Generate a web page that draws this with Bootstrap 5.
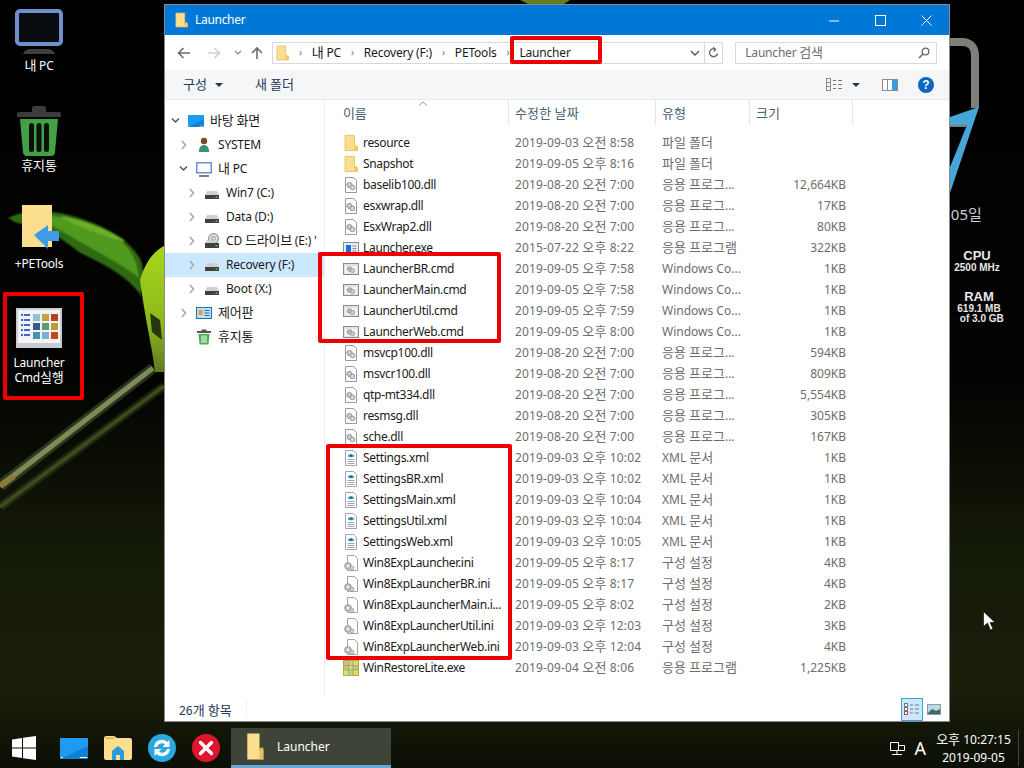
<!DOCTYPE html>
<html lang="ko">
<head>
    <meta charset="UTF-8">
    <meta name="viewport" content="width=device-width, initial-scale=1.0">
    <title>Launcher</title>
    <link href="https://cdn.jsdelivr.net/npm/bootstrap@5.3.0/dist/css/bootstrap.min.css" rel="stylesheet">
    <style>
        html, body { height: 100%; overflow: hidden; }
        body { background: #000; font-family: "Noto Sans", "Noto Sans CJK KR", sans-serif; font-size: 12px; color: #1a1a1a; }
        svg { display: block; flex: none; }
        .ko { font-size: 13px; }
        .desk { width: 1024px; height: 768px; position: relative; overflow: hidden; }
        .wallpaper { position: absolute; left: 0; top: 0; }
        .desk-icons { position: absolute; left: 0; top: 4px; width: 78px; }
        .desk-item { height: 99px; color: #fff; line-height: 15px; text-align: center; letter-spacing: -.2px; }
        .desk-pc { padding-top: 5px; }
        .desk-pc div { margin-top: 3px; }
        .desk-bin { padding-top: 3px; }
        .desk-bin div { margin-top: 2px; }
        .desk-tools { padding-top: 3px; }
        .desk-tools div { margin-top: 7px; }
        .desk-cmd { padding-top: 7px; }
        .desk-cmd div { margin-top: 7px; }
        .win { position: absolute; left: 164px; top: 4px; width: 786px; height: 718px; background: #fff; border: 1px solid #8a8a8a; }
        .titlebar { height: 30px; background: #0078d7; color: #fff; padding-left: 10px; }
        .titlebar .win-name { margin-left: 7px; letter-spacing: -.3px; }
        .cap-btn { width: 46px; height: 30px; }
        .addr-row { height: 35px; padding-left: 12px; padding-right: 12px; letter-spacing: -.2px; }
        .nav-arrows { width: 95px; }
        .nav-fwd { margin-left: 16px; }
        .nav-drop { margin-left: 13px; }
        .nav-up { margin-left: 9px; }
        .addr-box { width: 452px; height: 22px; border: 1px solid #d9d9d9; padding-left: 3px; }
        .addr-path { color: #1a1a1a; }
        .addr-sep { color: #777; margin: 0 10px; font-size: 10px; }
        .addr-end { width: 18px; border-left: 1px solid #d9d9d9; height: 20px; }
        .search-box { width: 202px; height: 22px; border: 1px solid #d9d9d9; margin-left: 12px; padding: 0 6px 0 9px; color: #6d6d6d; }
        .toolbar { height: 30px; background: #f5f6f7; border-bottom: 1px solid #e8e9ea; padding-left: 18px; padding-right: 15px; color: #1e395b; }
        .tool-caret { width: 0; height: 0; border-left: 4px solid transparent; border-right: 4px solid transparent; border-top: 4px solid #1e395b; }
        .tool-view-caret { margin-left: 9px; margin-right: 22px; }
        .tool-help { margin-left: 20px; }
        .panes { height: 597px; }
        .tree { width: 160px; border-right: 1px solid #f0f0f0; padding-top: 9px; flex: none; letter-spacing: -.2px; }
        .tree-row { height: 24px; white-space: nowrap; overflow: hidden; }
        .tree-row.sel { background: #cce8ff; }
        .tree-name { margin-left: 6px; }
        .tree-icon { margin-left: 2px; }
        .chev { width: 20px; flex: none; }
        .files { flex: 1; position: relative; }
        .head-row { height: 25px; color: #4c607a; position: relative; }
        .sort-mark { position: absolute; left: 93px; top: 1px; }
        .head-cell { height: 25px; padding-left: 6px; border-right: 1px solid #e5e5e5; line-height: 26px; }
        .c-name { width: 184px; flex: none; padding-left: 18px; white-space: nowrap; letter-spacing: -.32px; }
        .c-date { width: 147px; flex: none; padding-left: 6px; color: #6d6d6d; letter-spacing: .14px; }
        .c-type { width: 94px; flex: none; padding-left: 6px; color: #6d6d6d; white-space: nowrap; }
        .c-size { width: 103px; flex: none; padding-right: 7px; text-align: right; color: #6d6d6d; }
        .head-cell.c-name { padding-left: 18px; }
        .head-cell.c-date, .head-cell.c-type, .head-cell.c-size { color: #4c607a; text-align: left; padding-left: 6px; }
        .file-list { padding-top: 7px; }
        .file-row { height: 21px; line-height: 21px; }
        .file-row svg { margin-right: 4px; }
        .statusbar { height: 24px; padding-left: 14px; padding-right: 5px; color: #1e395b; }
        .status-text { margin-top: 3px; }
        .status-sep { width: 1px; height: 18px; background: #eee; margin-left: 14px; }
        .view-on { width: 22px; height: 23px; background: #cce8ff; border: 1px solid #3ba3d8; }
        .view-off { width: 21px; height: 23px; }
        .red-box { position: absolute; border: 4px solid #ee0000; border-radius: 2px; }
        .taskbar { position: absolute; left: 0; bottom: 0; width: 1024px; height: 40px; color: #fff; }
        .task-btn { width: 160px; height: 40px; background: #3f4438; border-bottom: 3px solid #68a9dc; padding-left: 15px; margin-left: 11px; }
        .task-btn span { margin-left: 13px; }
        .tray { width: 136px; height: 40px; padding-right: 5px; }
        .tray-a { font-size: 18px; margin-left: 9px; }
        .clock { width: 83px; text-align: center; line-height: 18px; margin-left: 6px; margin-right: 3px; }
        .tray-end { width: 1px; height: 36px; background: #444; }
        .gadget { position: absolute; color: #e8e8e8; font-family: "Liberation Sans", sans-serif; font-weight: 700; line-height: 10px; font-size: 10px; text-align: center; white-space: nowrap; }
        .gadget b { display: block; font-size: 13px; line-height: 14px; }
        .gadget-day { position: absolute; left: 937px; top: 203px; color: #cfcfcf; font-size: 15px; }
        .gadget-day .ko { font-size: 15px; }
        .pointer { position: absolute; left: 983px; top: 611px; }
    </style>
</head>
<body>
    <svg width="0" height="0" class="position-absolute">
        <defs>
            <symbol id="i-folder" viewBox="0 0 14 16">
                <path d="M1 .5h9.500V12h3v3.500H1z" fill="#fbdf8e" stroke="#e2bd5e" stroke-width=".8"/>
                <path d="M10.500 15.500V10.500h3v5z" fill="#eec864"/>
            </symbol>
            <symbol id="i-dll" viewBox="0 0 16 16">
                <path d="M2.500 .5h8l3 3v12h-11z" fill="#fff" stroke="#9a9a9a"/>
                <circle cx="6.500" cy="8" r="2.600" fill="#c3cbd2" stroke="#8d969e"/>
                <circle cx="9.500" cy="10.500" r="2.300" fill="#d3dbe2" stroke="#8d969e"/>
            </symbol>
            <symbol id="i-exe" viewBox="0 0 16 16">
                <rect x=".5" y="2.500" width="15" height="11" fill="#e9edf2" stroke="#7d8fa3"/>
                <rect x="3" y="5" width="5" height="7" fill="#1a6fd8"/>
                <path d="M9.500 6h4M9.500 8.500h4M9.500 11h4" stroke="#8a9099"/>
            </symbol>
            <symbol id="i-cmd" viewBox="0 0 16 16">
                <rect x=".5" y="2.500" width="15" height="11" fill="#dfe3e6" stroke="#8a8a8a"/>
                <rect x="2" y="5" width="12" height="7" fill="#f3f4f5"/>
                <circle cx="6.500" cy="8" r="2.300" fill="#b3bec7" stroke="#87919a" stroke-width=".8"/>
                <circle cx="9.500" cy="9.500" r="2.100" fill="#c6d3de" stroke="#87919a" stroke-width=".8"/>
            </symbol>
            <symbol id="i-xml" viewBox="0 0 16 16">
                <path d="M2.500 .5h8l3 3v12h-11z" fill="#fff" stroke="#a5a5a5"/>
                <path d="M4.500 6c1.500-2.500 5.500-2.500 7 0-1.500 1.800-5.500 1.800-7 0z" fill="#2aa7a0"/>
                <circle cx="8" cy="5.700" r="1.100" fill="#1d5fa8"/>
                <path d="M4.500 9.500h7M4.500 11.500h7M4.500 13.500h7" stroke="#a5a5a5"/>
            </symbol>
            <symbol id="i-ini" viewBox="0 0 16 16">
                <path d="M4.500 .5h7l3 3v12h-10z" fill="#fff" stroke="#a5a5a5"/>
                <circle cx="5" cy="11" r="3.300" fill="#c4c4c4" stroke="#989898"/>
                <circle cx="5" cy="11" r="1.200" fill="#f2f2f2"/>
                <circle cx="9" cy="13" r="2" fill="#d2d2d2" stroke="#989898" stroke-width=".7"/>
            </symbol>
            <symbol id="i-grid" viewBox="0 0 16 16">
                <rect x=".5" y=".5" width="15" height="15" fill="#fff" stroke="#b9a93a"/>
                <path d="M1 1h4.500v4.500H1z" fill="#f1a9a0"/><path d="M5.500 1H10v4.500H5.500z" fill="#b8d88a"/><path d="M10 1h5v4.500h-5z" fill="#f5d06f"/>
                <path d="M1 5.500h4.500V10H1z" fill="#a9d47c"/><path d="M5.500 5.500H10V10H5.500z" fill="#f3c979"/><path d="M10 5.500h5V10h-5z" fill="#a6cf8f"/>
                <path d="M1 10h4.500v5H1z" fill="#d4e28a"/><path d="M5.500 10H10v5H5.500z" fill="#9fdc9f"/><path d="M10 10h5v5h-5z" fill="#e8d868"/>
                <path d="M5.500 1v14M10 1v14M1 5.500h14M1 10h14" stroke="#8ea04a" stroke-width=".7"/>
            </symbol>
            <symbol id="i-drive" viewBox="0 0 16 16">
                <path d="M3 6h10l2 4H1z" fill="#cfcfcf"/>
                <rect x="1" y="10" width="14" height="4" fill="#3f3f3f"/>
                <rect x="11.500" y="11.500" width="2" height="1.300" fill="#4fd06a"/>
            </symbol>
            <symbol id="i-cdrive" viewBox="0 0 16 16">
                <circle cx="9.500" cy="5.500" r="5" fill="#d8d8d8" stroke="#8a8a8a"/>
                <circle cx="9.500" cy="5.500" r="1.600" fill="#fff" stroke="#8a8a8a"/>
                <path d="M3 7h6l2 3H1z" fill="#cfcfcf"/>
                <rect x="1" y="10" width="14" height="5" fill="#3f3f3f"/>
                <rect x="11.500" y="12" width="2" height="1.300" fill="#4fd06a"/>
            </symbol>
            <symbol id="i-bin" viewBox="0 0 44 50">
                <path d="M15 6V2.500C15 1 16 0 17.500 0h9C28 0 29 1 29 2.500V6h13c1.200 0 2 .8 2 2v3H0V8c0-1.200.8-2 2-2z" fill="#3c3c3c"/>
                <path d="M3 13h38l-3 33c-.2 2.400-1.600 4-4 4H10c-2.400 0-3.800-1.600-4-4z" fill="#43a047"/>
                <rect x="12" y="17" width="5" height="29" rx="2.500" fill="#0b0f08"/>
                <rect x="19.500" y="17" width="5" height="29" rx="2.500" fill="#0b0f08"/>
                <rect x="27" y="17" width="5" height="29" rx="2.500" fill="#0b0f08"/>
            </symbol>
            <symbol id="i-pc" viewBox="0 0 48 46">
                <rect x="2" y="2" width="44" height="33" rx="3" fill="#0a0d10" stroke="#6f8fcf" stroke-width="4"/>
                <path d="M8 45c1-3 4-5 8-5h16c4 0 7 2 8 5z" fill="#3f3f3f"/>
            </symbol>
            <symbol id="i-blue" viewBox="0 0 28 21">
                <rect width="28" height="21" fill="#1d9bf0"/>
                <path d="M0 21 28 8v13z" fill="#0f7fd8"/>
                <path d="M1 19.500h2M20 19.500h7" stroke="#fff"/>
            </symbol>
        </defs>
    </svg>

    <div class="desk">
        <svg class="wallpaper" width="1024" height="768" viewBox="0 0 1024 768">
            <defs>
                <linearGradient id="wp" x1="0" y1="0" x2="0" y2="1">
                    <stop offset="0" stop-color="#000"/>
                    <stop offset=".5" stop-color="#030402"/>
                    <stop offset=".72" stop-color="#141a08"/>
                    <stop offset=".9" stop-color="#181e0a"/>
                    <stop offset="1" stop-color="#0c0f05"/>
                </linearGradient>
                <linearGradient id="lime" x1="0" y1="0" x2="0" y2="1">
                    <stop offset="0" stop-color="#a8d61a"/>
                    <stop offset=".6" stop-color="#8fb81c"/>
                    <stop offset="1" stop-color="#5f7a20"/>
                </linearGradient>
            </defs>
            <rect width="1024" height="768" fill="url(#wp)"/>
            <!-- stems: a wide faint stroke under a narrow one stands in for the photo's soft focus -->
            <path d="M164 386 0 507" fill="none" stroke="#3c4a1e" stroke-width="9" stroke-opacity=".4"/>
            <path d="M164 386 0 507" fill="none" stroke="#3c4a1e" stroke-width="4"/>
            <path d="M153 368 0 486" fill="none" stroke="#67764a" stroke-width="11" stroke-opacity=".4"/>
            <path d="M153 368 0 486" fill="none" stroke="#7d8c56" stroke-width="5"/>
            <path d="M14 476 0 486" fill="none" stroke="#8a7a3a" stroke-width="6"/>
            <path d="M10 218C25 210 50 211 70 216 100 224 128 238 140 260 144 270 143 285 140 293 128 276 105 264 80 252 62 238 45 226 30 224 22 224 14 222 10 218z" fill="#2f6a12" stroke="#2f6a12" stroke-opacity=".45" stroke-width="3"/>
            <path d="M30 216C55 214 85 222 108 233 125 242 136 256 138 276 125 266 100 252 78 240 60 228 45 222 30 216z" fill="#4f9a1f" stroke="#4f9a1f" stroke-opacity=".5" stroke-width="3"/>
            <path d="M62 217C85 221 108 231 124 241 105 236 82 228 62 217z" fill="#6cb02a" stroke="#6cb02a" stroke-opacity=".5" stroke-width="3"/>
            <path d="M140 280C146 260 155 250 166 245V372H155C152 345 146 325 140 280z" fill="url(#lime)"/>
            <polygon points="150,313 160,320 162,340 152,332" fill="#27360f"/>
            <polygon points="520,0 570,0 564,4 528,4" fill="#6a7a20"/>
            <path d="M950 42h12c8 0 13 5 13 13v53M950 123h14l6-6" fill="none" stroke="#7f7f7a" stroke-width="8"/>
            <path d="M950 117 979 107 950 193V167L967 125H950z" fill="#46a6d8"/>
        </svg>

        <div class="desk-icons">
            <div class="desk-item desk-pc d-flex flex-column align-items-center">
                <svg width="48" height="46"><use href="#i-pc"/></svg>
                <div>내 PC</div>
            </div>
            <div class="desk-item desk-bin d-flex flex-column align-items-center">
                <svg width="44" height="50"><use href="#i-bin"/></svg>
                <div>휴지통</div>
            </div>
            <div class="desk-item desk-tools d-flex flex-column align-items-center">
                <svg width="42" height="44" viewBox="0 0 42 44">
                    <path d="M4 0h30v42H4z" fill="#fbdf8e"/>
                    <path d="M16 30 30 20v6h11v10H30v8z" fill="#3f9be8"/>
                </svg>
                <div>+PETools</div>
            </div>
            <div class="desk-item desk-cmd d-flex flex-column align-items-center">
                <svg width="46" height="40" viewBox="0 0 46 40">
                    <rect width="46" height="40" fill="#c9ccd2"/>
                    <rect x="2" y="2" width="42" height="33" fill="#f2f4f7"/>
                    <path d="M5 7h9M5 12h9M5 17h9M5 22h9M5 27h9" stroke="#3a68c8" stroke-width="2" stroke-dasharray="2 1 6 0"/>
                    <rect x="17" y="6" width="7" height="7" fill="#8cc4d4"/><rect x="26" y="6" width="7" height="7" fill="#c8a040"/><rect x="35" y="6" width="7" height="7" fill="#b8401c"/>
                    <rect x="17" y="15" width="7" height="7" fill="#3a5a8a"/><rect x="26" y="15" width="7" height="7" fill="#5a9a7a"/><rect x="35" y="15" width="7" height="7" fill="#b8a030"/>
                    <rect x="17" y="24" width="7" height="7" fill="#4a90a8"/><rect x="26" y="24" width="7" height="7" fill="#7ab0d8"/><rect x="35" y="24" width="7" height="7" fill="#c04a18"/>
                </svg>
                <div>Launcher<br>Cmd실행</div>
            </div>
        </div>

        <div class="gadget-day">월05일</div>
        <div class="gadget" style="left:950px;top:249px;width:54px"><b>CPU</b>2500 MHz</div>
        <div class="gadget" style="left:951px;top:290px;width:56px"><b>RAM</b>619.1 MB<br>&nbsp;&nbsp;of 3.0 GB</div>

        <div class="win d-flex flex-column">
            <div class="titlebar d-flex align-items-center">
                <svg width="13" height="16"><use href="#i-folder"/></svg>
                <span class="win-name flex-grow-1">Launcher</span>
                <div class="cap-btn d-flex align-items-center justify-content-center"><svg width="11" height="11"><path d="M0 6h10" stroke="#fff"/></svg></div>
                <div class="cap-btn d-flex align-items-center justify-content-center"><svg width="11" height="11"><rect x=".5" y=".5" width="10" height="10" fill="none" stroke="#fff"/></svg></div>
                <div class="cap-btn d-flex align-items-center justify-content-center"><svg width="11" height="11"><path d="M.5.5l10 10M10.500.5l-10 10" stroke="#fff"/></svg></div>
            </div>

            <div class="addr-row d-flex align-items-center">
                <div class="nav-arrows d-flex align-items-center">
                    <svg width="14" height="12" viewBox="0 0 14 12"><path d="M13 6H2M6.500 1 1.500 6l5 5" fill="none" stroke="#6d6d6d" stroke-width="1.600"/></svg>
                    <svg width="14" height="12" viewBox="0 0 14 12" class="nav-fwd"><path d="M1 6h11M7.500 1l5 5-5 5" fill="none" stroke="#d0d0d0" stroke-width="1.600"/></svg>
                    <svg width="8" height="6" viewBox="0 0 8 6" class="nav-drop"><path d="M1 1l3 3 3-3" fill="none" stroke="#8a8a8a" stroke-width="1.200"/></svg>
                    <svg width="12" height="14" viewBox="0 0 12 14" class="nav-up"><path d="M6 13V2M1 7l5-5 5 5" fill="none" stroke="#6d6d6d" stroke-width="1.600"/></svg>
                </div>
                <div class="addr-box d-flex align-items-center">
                    <svg width="13" height="16"><use href="#i-folder"/></svg>
                    <span class="addr-sep">›</span><span class="addr-path">내 PC</span>
                    <span class="addr-sep">›</span><span class="addr-path">Recovery (F:)</span>
                    <span class="addr-sep">›</span><span class="addr-path">PETools</span>
                    <span class="addr-sep">›</span><span class="addr-path flex-grow-1">Launcher</span>
                    <svg width="10" height="6" viewBox="0 0 10 6" class="me-1"><path d="M1 1l4 4 4-4" fill="none" stroke="#555" stroke-width="1.400"/></svg>
                    <div class="addr-end d-flex align-items-center justify-content-center">
                        <svg width="11" height="12" viewBox="0 0 11 12"><path d="M9.500 6.500a4 4 0 1 1-2-4.300M5 .5l2.500 1.700L6 4.500" fill="none" stroke="#6d6d6d" stroke-width="1.400"/></svg>
                    </div>
                </div>
                <div class="search-box d-flex align-items-center justify-content-between">
                    <span>Launcher 검색</span>
                    <svg width="12" height="12" viewBox="0 0 12 12"><circle cx="7.500" cy="4.500" r="3.300" fill="none" stroke="#666" stroke-width="1.300"/><path d="M5 7l-4 4" stroke="#666" stroke-width="1.600"/></svg>
                </div>
            </div>

            <div class="toolbar d-flex align-items-center">
                <span>구성</span><span class="tool-caret ms-2"></span>
                <span class="tool-new flex-grow-1 ms-4 ps-2">새 폴더</span>
                <svg width="17" height="14" viewBox="0 0 17 14"><rect x=".5" y=".5" width="4" height="4" fill="none" stroke="#8a8a8a"/><rect x=".5" y="4.500" width="4" height="4" fill="none" stroke="#8a8a8a"/><rect x=".5" y="8.500" width="4" height="4" fill="none" stroke="#8a8a8a"/><path d="M7 2.500h3M12 2.500h4M7 6.500h3M12 6.500h4M7 10.500h3M12 10.500h4" stroke="#777"/></svg>
                <span class="tool-caret tool-view-caret"></span>
                <svg width="16" height="12" viewBox="0 0 16 12"><rect x=".5" y=".5" width="15" height="11" fill="#fff" stroke="#8a8a8a"/><rect x="10" y="1" width="5" height="10" fill="#3b9be0"/><path d="M5.500 1v10" stroke="#8a8a8a"/></svg>
                <svg width="16" height="16" viewBox="0 0 16 16" class="tool-help"><circle cx="8" cy="8" r="8" fill="#0b66c2"/><text x="8" y="12" text-anchor="middle" font-size="12" font-weight="700" fill="#fff" font-family="Liberation Sans">?</text></svg>
            </div>

            <div class="panes d-flex">
                <div class="tree" id="treeList"></div>
                <div class="files">
                    <div class="head-row d-flex">
                        <div class="head-cell c-name">이름</div>
                        <div class="head-cell c-date">수정한 날짜</div>
                        <div class="head-cell c-type">유형</div>
                        <div class="head-cell c-size">크기</div>
                        <svg class="sort-mark" width="10" height="5" viewBox="0 0 10 5"><path d="M1 4.500 5 1l4 3.500" fill="none" stroke="#9a9a9a"/></svg>
                    </div>
                    <div class="file-list" id="fileList"></div>
                </div>
            </div>

            <div class="statusbar d-flex align-items-center">
                <span class="status-text">26개 항목</span><span class="status-sep me-auto"></span>
                <div class="view-on d-flex align-items-center justify-content-center">
                    <svg width="16" height="13" viewBox="0 0 16 13"><rect x=".5" y=".5" width="3" height="3" fill="#fff" stroke="#777"/><rect x=".5" y="4.500" width="3" height="3" fill="#fff" stroke="#777"/><rect x=".5" y="8.500" width="3" height="3" fill="#fff" stroke="#b44"/><path d="M6 2h3M11 2h4M6 6h3M11 6h4M6 10h3M11 10h4" stroke="#777"/></svg>
                </div>
                <div class="view-off d-flex align-items-center justify-content-center">
                    <svg width="14" height="11" viewBox="0 0 14 11"><rect x=".5" y=".5" width="13" height="10" fill="#bcd8ec" stroke="#999"/><path d="M1 9 5 5l4 2 4-2v5H1z" fill="#3c6e5a"/></svg>
                </div>
            </div>
        </div>

        <div class="red-box" style="left:510px;top:36px;width:92px;height:28px"></div>
        <div class="red-box" style="left:318px;top:252px;width:183px;height:91px"></div>
        <div class="red-box" style="left:326px;top:444px;width:186px;height:216px"></div>
        <div class="red-box" style="left:3px;top:292px;width:81px;height:108px"></div>

        <svg class="pointer" width="12" height="20" viewBox="0 0 12 20"><path d="M.5.5v15l4-3.500 3 7 2.500-1-3-6.500h5z" fill="#fff" stroke="#000" stroke-width=".6"/></svg>

        <div class="taskbar d-flex align-items-center">
            <div class="d-flex align-items-center ps-2 flex-grow-1">
                <svg width="24" height="24" viewBox="0 0 24 24" class="ms-1"><path d="M0 3.500 10 2v9.500H0zM11 1.800 24 0v11.500H11zM0 12.500h10V22L0 20.500zM11 12.500h13V24l-13-1.800z" fill="#fff"/></svg>
                <svg width="28" height="21" class="ms-4"><use href="#i-blue"/></svg>
                <svg width="28" height="24" viewBox="0 0 28 24" class="ms-3"><path d="M0 2c0-1 1-2 2-2h8l3 2h13c1 0 2 1 2 2v18c0 1-1 2-2 2H2c-1 0-2-1-2-2z" fill="#fbdf8e"/><path d="M1 1.500h9l1 1.500H1z" fill="#e0b040"/><path d="M8 24v-9l6-5 6 5v9h-4v-5h-4v5z" fill="#2b9be0"/></svg>
                <svg width="28" height="28" viewBox="0 0 28 28" class="ms-3"><circle cx="14" cy="14" r="14" fill="#2ba8e0"/><path d="M6 13a8 8 0 0 1 13.500-5l2-2v7h-7l2.500-2.500A5 5 0 0 0 9 13zM22 15a8 8 0 0 1-13.500 5l-2 2v-7h7L11 17.500A5 5 0 0 0 19 15z" fill="#fff"/></svg>
                <svg width="28" height="28" viewBox="0 0 28 28" class="ms-3"><circle cx="14" cy="14" r="14" fill="#e0142c"/><path d="M8.500 8.500l11 11M19.500 8.500l-11 11" stroke="#fff" stroke-width="3.500" stroke-linecap="round"/></svg>
                <div class="task-btn d-flex align-items-center me-auto">
                    <svg width="18" height="27" viewBox="0 0 14 22" preserveAspectRatio="none"><path d="M1 .5h9.500V14h3v7.500H1z" fill="#fbdf8e"/><path d="M10.500 21.500V12h3v9.500z" fill="#e6bf5c"/></svg>
                    <span>Launcher</span>
                </div>
            </div>
            <div class="tray d-flex align-items-center justify-content-end">
                <svg width="15" height="15" viewBox="0 0 15 15"><path d="M.5 1.500h8v8h-8zM8.500 4.500h6v5h-6zM2 13.500h10M7 9.500v4" fill="none" stroke="#fff"/></svg>
                <span class="tray-a">A</span>
                <div class="clock">오후 10:27:15<br>2019-09-05</div>
                <div class="tray-end"></div>
            </div>
        </div>
    </div>

    <script>
        const tree = [
            ['v', 0, 'i-blue', '바탕 화면'],
            ['>', 1, 'user', 'SYSTEM'],
            ['v', 1, 'mini-pc', '내 PC'],
            ['>', 2, 'i-drive', 'Win7 (C:)'],
            ['>', 2, 'i-drive', 'Data (D:)'],
            ['>', 2, 'i-cdrive', 'CD 드라이브 (E:) \''],
            ['>', 2, 'i-drive', 'Recovery (F:)', true],
            ['>', 2, 'i-drive', 'Boot (X:)'],
            ['>', 1, 'panel', '제어판'],
            ['', 1, 'mini-bin', '휴지통']
        ];
        const F = '파일 폴더', A = '응용 프로그...', W = 'Windows Co...', X = 'XML 문서', I = '구성 설정', P = '응용 프로그램';
        const files = [
            ['i-folder', 'resource', '2019-09-03 오전 8:58', F, ''],
            ['i-folder', 'Snapshot', '2019-09-05 오후 8:16', F, ''],
            ['i-dll', 'baselib100.dll', '2019-08-20 오전 7:00', A, '12,664KB'],
            ['i-dll', 'esxwrap.dll', '2019-08-20 오전 7:00', A, '17KB'],
            ['i-dll', 'EsxWrap2.dll', '2019-08-20 오전 7:00', A, '80KB'],
            ['i-exe', 'Launcher.exe', '2015-07-22 오후 8:22', P, '322KB'],
            ['i-cmd', 'LauncherBR.cmd', '2019-09-05 오후 7:58', W, '1KB'],
            ['i-cmd', 'LauncherMain.cmd', '2019-09-05 오후 7:58', W, '1KB'],
            ['i-cmd', 'LauncherUtil.cmd', '2019-09-05 오후 7:59', W, '1KB'],
            ['i-cmd', 'LauncherWeb.cmd', '2019-09-05 오후 8:00', W, '1KB'],
            ['i-dll', 'msvcp100.dll', '2019-08-20 오전 7:00', A, '594KB'],
            ['i-dll', 'msvcr100.dll', '2019-08-20 오전 7:00', A, '809KB'],
            ['i-dll', 'qtp-mt334.dll', '2019-08-20 오전 7:00', A, '5,554KB'],
            ['i-dll', 'resmsg.dll', '2019-08-20 오전 7:00', A, '305KB'],
            ['i-dll', 'sche.dll', '2019-08-20 오전 7:00', A, '167KB'],
            ['i-xml', 'Settings.xml', '2019-09-03 오후 10:02', X, '1KB'],
            ['i-xml', 'SettingsBR.xml', '2019-09-03 오후 10:02', X, '1KB'],
            ['i-xml', 'SettingsMain.xml', '2019-09-03 오후 10:04', X, '1KB'],
            ['i-xml', 'SettingsUtil.xml', '2019-09-03 오후 10:04', X, '1KB'],
            ['i-xml', 'SettingsWeb.xml', '2019-09-03 오후 10:05', X, '1KB'],
            ['i-ini', 'Win8ExpLauncher.ini', '2019-09-05 오후 8:17', I, '4KB'],
            ['i-ini', 'Win8ExpLauncherBR.ini', '2019-09-05 오후 8:17', I, '4KB'],
            ['i-ini', 'Win8ExpLauncherMain.i...', '2019-09-05 오후 8:02', I, '2KB'],
            ['i-ini', 'Win8ExpLauncherUtil.ini', '2019-09-03 오후 12:03', I, '3KB'],
            ['i-ini', 'Win8ExpLauncherWeb.ini', '2019-09-03 오후 12:04', I, '4KB'],
            ['i-grid', 'WinRestoreLite.exe', '2019-09-04 오전 8:06', P, '1,225KB']
        ];

        // small tree icons that only appear once
        const treeIcons = {
            'user': '<svg class="tree-icon" width="16" height="16" viewBox="0 0 16 16"><circle cx="8" cy="4" r="3.200" fill="#7a4a28"/><path d="M3 15c0-5 2-7 5-7s5 2 5 7z" fill="#3f8f6a"/></svg>',
            'mini-pc': '<svg class="tree-icon" width="16" height="16" viewBox="0 0 16 16"><rect x=".75" y="1.750" width="14.500" height="10" fill="#fff" stroke="#6f8fcf" stroke-width="1.500"/><path d="M3 15h10" stroke="#555" stroke-width="1.500"/></svg>',
            'panel': '<svg class="tree-icon" width="16" height="16" viewBox="0 0 16 16"><rect x=".5" y="2.500" width="15" height="11" fill="#bfe0f5" stroke="#1d6fb8"/><rect x="2.500" y="5" width="4" height="5" fill="#e89a30"/><path d="M8.500 5.500h5M8.500 8h5M8.500 10.500h5" stroke="#1d6fb8"/></svg>',
            'mini-bin': '<svg class="tree-icon" width="16" height="16" viewBox="0 0 16 16"><path d="M5.500 2V.5h5V2H15v2H1V2z" fill="#555"/><path d="M2.500 5h11l-1 10.500h-9z" fill="#4caf50"/><path d="M6 6.500V14M8 6.500V14M10 6.500V14" stroke="#fff"/></svg>'
        };

        function chevron(kind) {
            if (kind === 'v') return '<svg class="chev" width="20" height="8" viewBox="0 0 20 8"><path d="M6 1.500l3.500 3.500L13 1.500" fill="none" stroke="#555" stroke-width="1.500"/></svg>';
            if (kind === '>') return '<svg class="chev" width="20" height="10" viewBox="0 0 20 10"><path d="M8 1l3.500 4L8 9" fill="none" stroke="#a6a6a6" stroke-width="1.500"/></svg>';
            return '<span class="chev"></span>';
        }

        document.getElementById('treeList').innerHTML = tree.map(t => {
            const icon = treeIcons[t[2]] || `<svg class="tree-icon" width="16" height="16"><use href="#${t[2]}"/></svg>`;
            return `<div class="tree-row d-flex align-items-center ${t[4] ? 'sel' : ''}" data-d="${t[1]}">
                <span class="indent"></span>${chevron(t[0])}${icon}<span class="tree-name">${t[3]}</span></div>`;
        }).join('');
        document.querySelectorAll('.tree-row').forEach(r => {
            r.querySelector('.indent').style.width = (r.dataset.d * 8 + 1) + 'px';
        });

        document.getElementById('fileList').innerHTML = files.map(f => `
            <div class="file-row d-flex">
                <div class="c-name d-flex align-items-center"><svg width="16" height="16"><use href="#${f[0]}"/></svg>${f[1]}</div>
                <div class="c-date">${f[2]}</div>
                <div class="c-type">${f[3]}</div>
                <div class="c-size">${f[4]}</div>
            </div>`).join('');

        // Hangul runs are a point bigger than the latin text around them
        const walker = document.createTreeWalker(document.querySelector('.desk'), NodeFilter.SHOW_TEXT);
        const textNodes = [];
        while (walker.nextNode()) {
            if (/[가-힣]/.test(walker.currentNode.nodeValue)) textNodes.push(walker.currentNode);
        }
        textNodes.forEach(node => {
            const holder = document.createElement('span');
            holder.innerHTML = node.nodeValue.replace(/[가-힣]+/g, '<span class="ko">$&</span>');
            node.replaceWith(...holder.childNodes);
        });
    </script>
</body>
</html>
